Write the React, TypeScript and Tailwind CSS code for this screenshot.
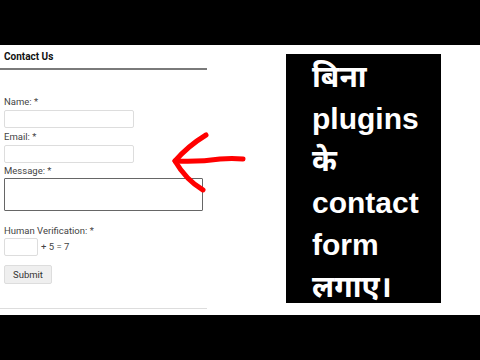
export default function App() {
  return (
    <div className="flex h-[360px] w-[480px] flex-col overflow-hidden bg-white font-['Roboto','Liberation_Sans',sans-serif]">
      <div className="h-[45px] bg-black" />
      <div className="relative flex flex-1">
        {/* Form column */}
        <div className="flex w-[207px] flex-col">
          <div className="border-b-2 border-[#7a7a7a] px-[4px] pb-[5px] pt-[6px] text-[10px] font-bold leading-[12px] text-[#111]">
            Contact Us
          </div>
          <div className="flex flex-col px-[4px] pt-[26px] text-[9.5px] leading-[12px] text-[#444]">
            <label>Name: *</label>
            <input className="mt-[2px] h-[18px] w-[130px] rounded-[2px] border border-[#ddd] bg-white" />
            <label className="mt-[3px]">Email: *</label>
            <input className="mt-[2px] h-[18px] w-[130px] rounded-[2px] border border-[#ddd] bg-white" />
            <label className="mt-[2px]">Message: *</label>
            <textarea className="mt-[1px] h-[33px] w-[199px] resize-none rounded-[1px] border border-[#666] bg-white" />
            <label className="mt-[14px]">Human Verification: *</label>
            <div className="mt-px flex items-center gap-[3px]">
              <input className="h-[18px] w-[34px] rounded-[2px] border border-[#ddd] bg-white" />
              <span>+ 5 = 7</span>
            </div>
            <button className="mt-[9px] h-[19px] w-[48px] rounded-[2px] border border-[#ddd] bg-[#efefef] text-[9.5px] text-[#333]">
              Submit
            </button>
          </div>
          <div className="mt-auto mb-[6px] h-px bg-[#ddd]" />
        </div>

        {/* Red arrow drawing */}
        <svg className="absolute left-0 top-0" width="480" height="270" viewBox="0 45 480 270">
          <g fill="none" stroke="#ff0000" strokeWidth="5" strokeLinecap="round" strokeLinejoin="round">
            <path d="M206 135 Q188 146 175 161" />
            <path d="M175 161 Q186 180 203 190" />
            <path d="M176 161 Q200 162 220 159 Q232 158 243 159" />
          </g>
        </svg>

        {/* Title card */}
        <div className="ml-[79px] mt-[9px] h-[249px] w-[155px] bg-black pl-[26px] pt-[2px] font-['Liberation_Sans','Noto_Sans','DejaVu_Sans',sans-serif] text-[30px] font-bold leading-[42px] text-white">
          <div>बिना</div>
          <div>plugins</div>
          <div>के</div>
          <div>contact</div>
          <div>form</div>
          <div>लगाए।</div>
        </div>
      </div>
      <div className="h-[45px] bg-black" />
    </div>
  );
}
